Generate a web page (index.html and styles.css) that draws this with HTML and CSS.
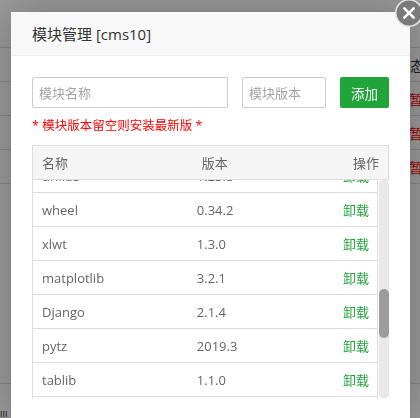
FILE: index.html
```html
<!DOCTYPE html>
<html lang="zh-CN">
<head>
<meta charset="utf-8">
<title>模块管理</title>
<link rel="stylesheet" href="styles.css">
</head>
<body>
<div class="page">
  <div class="page-top"></div>
  <div class="page-row"><span class="cell status">状态</span></div>
  <div class="page-row"><span class="cell red">暂停</span></div>
  <div class="page-row"><span class="cell red">暂停</span></div>
  <div class="page-row"><span class="cell red">暂停</span></div>
  <div class="page-tall"></div>
  <div class="page-foot">ııı</div>
</div>
<div class="shade"></div>
<div class="layer">
  <div class="layer-title">模块管理 [cms10]</div>
  <div class="layer-body">
    <div class="form-row">
      <input class="input name" placeholder="模块名称">
      <input class="input ver" placeholder="模块版本">
      <button class="btn">添加</button>
    </div>
    <p class="tip">* 模块版本留空则安装最新版 *</p>
    <div class="table">
      <div class="thead">
        <span class="c">名称</span><span class="c">版本</span><span class="c op">操作</span>
      </div>
      <div class="tbody-wrap">
        <div class="tbody">
          <div class="rows">
            <div class="row"><span class="c">urllib3</span><span class="c">1.25.8</span><span class="c op">卸载</span></div>
            <div class="row"><span class="c">wheel</span><span class="c">0.34.2</span><span class="c op">卸载</span></div>
            <div class="row"><span class="c">xlwt</span><span class="c">1.3.0</span><span class="c op">卸载</span></div>
            <div class="row"><span class="c">matplotlib</span><span class="c">3.2.1</span><span class="c op">卸载</span></div>
            <div class="row"><span class="c">Django</span><span class="c">2.1.4</span><span class="c op">卸载</span></div>
            <div class="row"><span class="c">pytz</span><span class="c">2019.3</span><span class="c op">卸载</span></div>
            <div class="row"><span class="c">tablib</span><span class="c">1.1.0</span><span class="c op">卸载</span></div>
            <div class="row"><span class="c">requests</span><span class="c">2.22.0</span><span class="c op">卸载</span></div>
          </div>
        </div>
        <div class="scrollbar"><div class="thumb"></div></div>
      </div>
    </div>
  </div>
  <a class="close" title="关闭">
    <svg width="28" height="28" viewBox="0 0 28 28">
      <circle cx="14" cy="14" r="13.2" fill="#7a7a7a" stroke="#e2e2e2" stroke-width="1.6"/>
      <path d="M9.3 9.3 L18.7 18.7 M18.7 9.3 L9.3 18.7" stroke="#fff" stroke-width="2.6" stroke-linecap="round" fill="none"/>
    </svg>
  </a>
</div>
</body>
</html>
```
FILE: styles.css
```css
html, body {
  margin: 0;
  padding: 0;
}
body {
  width: 420px;
  height: 418px;
  overflow: hidden;
  background: #fff;
  font-family: "Open Sans", "Noto Sans CJK SC", sans-serif;
  position: relative;
}

/* page behind the layer */
.page {
  height: 418px;
  overflow: hidden;
}
.page-top {
  height: 47px;
  border-bottom: 1px solid #ddd;
}
.page-row {
  height: 33px;
  border-bottom: 1px solid #ddd;
  display: flex;
  align-items: center;
  font-size: 14px;
}
.cell.status {
  padding-left: 396px;
  color: #333;
  white-space: nowrap;
}
.cell.red {
  padding-left: 409px;
  color: #f00;
  white-space: nowrap;
}
.page-tall {
  height: 199px;
  border-bottom: 1px solid #ddd;
}
.page-foot {
  padding: 24px 0 0 0;
  font-size: 10px;
  color: #333;
  line-height: 10px;
}

.shade {
  position: fixed;
  inset: 0;
  background: rgba(0, 0, 0, 0.4);
}

/* layer */
.layer {
  position: absolute;
  left: 11px;
  top: 12px;
  width: 399px;
  height: 406px;
  background: #fff;
  box-shadow: 1px 1px 40px rgba(0, 0, 0, 0.25);
}
.layer-title {
  height: 43px;
  line-height: 44px;
  padding-left: 21px;
  background: #f8f8f8;
  border-bottom: 1px solid #eee;
  font-size: 15px;
  color: #333;
}
.layer-body {
  padding: 21px 21px 0;
}
.form-row {
  display: flex;
  gap: 14px;
  height: 31px;
}
.input {
  box-sizing: border-box;
  height: 31px;
  margin: 0;
  border: 1px solid #ccc;
  border-radius: 2px;
  padding: 0 6px;
  font-family: "Open Sans", "Noto Sans CJK SC", sans-serif;
  font-size: 13px;
  color: #333;
  outline: none;
}
.input::placeholder {
  color: #a5a5a5;
}
.input.name {
  width: 196px;
}
.input.ver {
  width: 84px;
}
.btn {
  box-sizing: border-box;
  width: 49px;
  height: 31px;
  margin: 0;
  padding: 0;
  border: none;
  border-radius: 2px;
  background: #20a53a;
  color: #fff;
  font-family: "Open Sans", "Noto Sans CJK SC", sans-serif;
  font-size: 13.5px;
}
.tip {
  margin: 8px 0 0;
  line-height: 20px;
  font-size: 12.5px;
  color: #f00;
}

/* table */
.table {
  margin-top: 9px;
  width: 357px;
}
.thead {
  box-sizing: border-box;
  height: 35px;
  display: grid;
  grid-template-columns: 45% 1fr auto;
  align-items: center;
  border: 1px solid #ddd;
  background: #f5f5f5;
  font-size: 13px;
  color: #666;
}
.thead .c {
  padding: 0 9px;
}
.tbody-wrap {
  display: flex;
  height: 219px;
}
.tbody {
  box-sizing: border-box;
  width: 346px;
  border-left: 1px solid #ddd;
  border-right: 1px solid #ddd;
  overflow: hidden;
}
.rows {
  margin-top: -21px;
}
.row {
  height: 33px;
  display: grid;
  grid-template-columns: 45% 1fr auto;
  align-items: center;
  border-bottom: 1px solid #ddd;
  font-size: 13px;
  color: #666;
}
.row .c {
  padding: 0 8px 0 9px;
}
.c.op {
  text-align: right;
}
.row .op {
  color: #20a53a;
}
.scrollbar {
  width: 10px;
  margin-left: 1px;
  height: 218px;
  border-radius: 5px;
  background: #e9e9e9;
  box-shadow: inset 0 0 1px rgba(0, 0, 0, 0.2);
}
.thumb {
  margin-top: 109px;
  height: 49px;
  border-radius: 5px;
  background: #9c9c9c;
}

.close {
  position: absolute;
  left: 384px;
  top: -13px;
  width: 28px;
  height: 28px;
  display: block;
}
.close svg {
  display: block;
}
```
